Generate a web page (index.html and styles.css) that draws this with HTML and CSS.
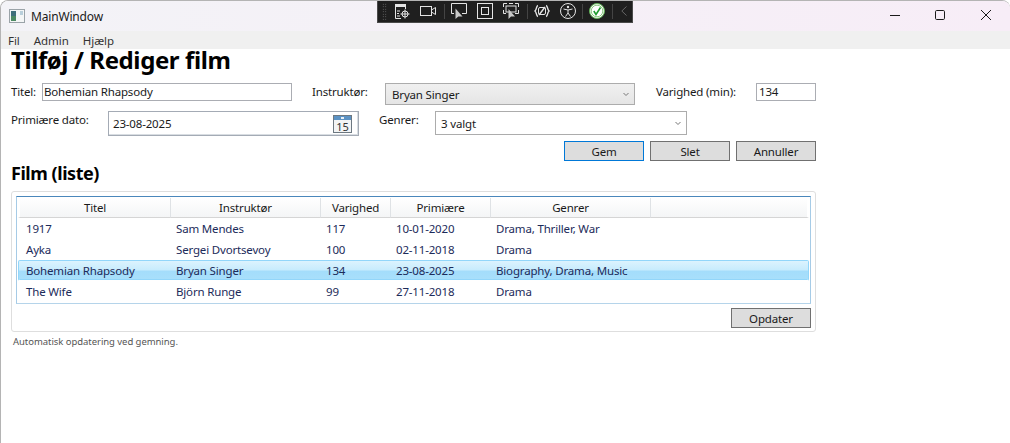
FILE: index.html
```html
<!DOCTYPE html>
<html lang="da">
<head>
  <meta charset="UTF-8">
  <title>MainWindow</title>
  <link rel="stylesheet" href="styles.css">
</head>
<body>

<div class="window">
  <div class="titlebar">
    <svg class="app-icon" width="16" height="14" viewBox="0 0 16 14">
      <rect x="0.5" y="0.5" width="15" height="13" fill="#f4f6f6" stroke="#9aa3a8"/>
      <rect x="2" y="2" width="5" height="10" fill="#3f6f7a"/>
      <rect x="2" y="7" width="5" height="5" fill="#4d8a63"/>
      <rect x="11" y="2" width="3" height="4" fill="#b9cfdb"/>
    </svg>
    <span class="app-name">MainWindow</span>
    <div class="caption">
      <svg width="10" height="10" viewBox="0 0 10 10"><path d="M0 5.5H10" stroke="#1a1a1a"/></svg>
      <svg width="10" height="10" viewBox="0 0 10 10"><rect x="0.5" y="0.5" width="9" height="9" rx="1.2" fill="none" stroke="#1a1a1a"/></svg>
      <svg width="10" height="10" viewBox="0 0 10 10"><path d="M0 0L10 10M10 0L0 10" stroke="#1a1a1a"/></svg>
    </div>
  </div>

  <div class="menubar">
    <span>Fil</span>
    <span>Admin</span>
    <span>Hjælp</span>
  </div>

  <div class="content">
    <h1>Tilføj / Rediger film</h1>

    <div class="form-row row-one">
      <label class="lbl-title">Titel:</label>
      <div class="field f-title">Bohemian Rhapsody</div>
      <label class="lbl-director">Instruktør:</label>
      <div class="combo f-director">
        <span>Bryan Singer</span>
        <svg class="chev" width="6" height="3" viewBox="0 0 6 3"><path d="M0.5 0L3 2.5L5.5 0" fill="none" stroke="#777"/></svg>
      </div>
      <label class="lbl-length">Varighed (min):</label>
      <div class="field f-length">134</div>
    </div>

    <div class="form-row row-two">
      <label class="lbl-date">Primiære dato:</label>
      <div class="date f-date">
        <span>23-08-2025</span>
        <svg class="cal" width="19" height="18" viewBox="0 0 19 18">
          <rect x="0.5" y="0.5" width="18" height="17" fill="#f2f4f5" stroke="#6d7881"/>
          <rect x="1" y="1" width="17" height="4" fill="#5b92c4"/>
          <rect x="8" y="2" width="3" height="2" fill="#e8f0f6"/>
          <text x="9.5" y="15.5" class="cal-num">15</text>
        </svg>
      </div>
      <label class="lbl-genre">Genrer:</label>
      <div class="combo-white f-genre">
        <span>3 valgt</span>
        <svg class="chev" width="6" height="3" viewBox="0 0 6 3"><path d="M0.5 0L3 2.5L5.5 0" fill="none" stroke="#777"/></svg>
      </div>
    </div>

    <div class="actions">
      <button class="btn btn-default">Gem</button>
      <button class="btn">Slet</button>
      <button class="btn">Annuller</button>
    </div>

    <h2>Film (liste)</h2>

    <div class="panel">
      <div class="grid">
        <table>
          <colgroup>
            <col class="c1"><col class="c2"><col class="c3"><col class="c4"><col class="c5"><col>
          </colgroup>
          <thead>
            <tr><th>Titel</th><th>Instruktør</th><th>Varighed</th><th>Primiære</th><th>Genrer</th><th></th></tr>
          </thead>
          <tbody>
            <tr><td>1917</td><td>Sam Mendes</td><td>117</td><td>10-01-2020</td><td>Drama, Thriller, War</td><td></td></tr>
            <tr><td>Ayka</td><td>Sergei Dvortsevoy</td><td>100</td><td>02-11-2018</td><td>Drama</td><td></td></tr>
            <tr class="selected"><td>Bohemian Rhapsody</td><td>Bryan Singer</td><td>134</td><td>23-08-2025</td><td>Biography, Drama, Music</td><td></td></tr>
            <tr><td>The Wife</td><td>Björn Runge</td><td>99</td><td>27-11-2018</td><td>Drama</td><td></td></tr>
          </tbody>
        </table>
      </div>
      <div class="panel-foot">
        <button class="btn">Opdater</button>
      </div>
    </div>

    <p class="note">Automatisk opdatering ved gemning.</p>
  </div>

  <!-- debug toolbar lies over the title bar -->
  <div class="toolbar">
    <i class="grip"></i>
    <svg width="16" height="16" viewBox="0 0 16 16" fill="none" stroke="#e4e4e4">
      <path d="M1.5 5V15.5H7M1.5 1.5H11.5V6M1.5 1.5V5" /><rect x="1" y="1" width="11" height="3" fill="#e4e4e4" stroke="none"/>
      <path d="M3 8H6M3 10.5H5M3 13H6"/><circle cx="11" cy="11" r="3"/><path d="M11 6.5V15.5M6.5 11H15.5"/>
    </svg>
    <svg width="16" height="16" viewBox="0 0 16 16" fill="none" stroke="#e4e4e4">
      <rect x="0.5" y="3.5" width="11" height="9"/><path d="M11.5 7L15.5 4.5V11.5L11.5 9"/>
    </svg>
    <i class="tb-sep"></i>
    <svg width="16" height="16" viewBox="0 0 16 16" fill="none" stroke="#e4e4e4">
      <path d="M3 10.5H0.5V0.5H15.5V10.5H11"/><path d="M4.5 5.5V16L7.3 13.5H11.5Z" fill="#c8c8c8" stroke="none"/>
    </svg>
    <svg width="16" height="16" viewBox="0 0 16 16" fill="none" stroke="#e4e4e4">
      <rect x="0.5" y="0.5" width="15" height="15"/><rect x="4.5" y="4.5" width="7" height="7"/>
    </svg>
    <svg width="16" height="16" viewBox="0 0 16 16" fill="none" stroke="#e4e4e4">
      <path d="M0.5 4V0.5H4M12 0.5H15.5V4M0.5 7V10.5H3M15.5 7V10.5H12M6 0.5H10"/><rect x="3" y="3" width="10" height="6"/><path d="M5.5 6V16L8 13.5H12Z" fill="#c8c8c8" stroke="none"/>
    </svg>
    <i class="tb-sep"></i>
    <svg width="16" height="16" viewBox="0 0 16 16" fill="none" stroke="#e4e4e4">
      <path d="M4 2.5C2 3 3 6 1 8C3 10 2 13 4 13.5M12 2.5C14 3 13 6 15 8C13 10 14 13 12 13.5" stroke-width="1.4"/><rect x="4.5" y="4.5" width="7" height="7" rx="1.5"/><path d="M5 12L11 4" stroke-width="1.4"/>
    </svg>
    <svg width="16" height="16" viewBox="0 0 16 16" fill="none" stroke="#e4e4e4">
      <circle cx="8" cy="8" r="7.5"/><circle cx="8" cy="4" r="1.2" fill="#e4e4e4" stroke="none"/><path d="M3.5 6L8 7L12.5 6M8 7V10L5.5 13.5M8 10L10.5 13.5"/>
    </svg>
    <i class="tb-sep tb-sep-a"></i>
    <svg width="16" height="16" viewBox="0 0 16 16">
      <circle cx="8" cy="8" r="7.5" fill="#f4f7f2" stroke="#5fb356"/><circle cx="8" cy="8" r="5.8" fill="#fff" stroke="#8ccb82"/><path d="M4.8 8L7 11.5L11.5 4.5" fill="none" stroke="#1f9c2e" stroke-width="1.6"/>
    </svg>
    <i class="tb-sep tb-sep-b"></i>
    <svg class="tb-chev" width="6" height="10" viewBox="0 0 6 10"><path d="M5.5 0.5L0.8 5L5.5 9.5" fill="none" stroke="#666"/></svg>
  </div>
</div>

</body>
</html>
```

FILE: styles.css
```css
* {
  margin: 0;
  padding: 0;
  box-sizing: border-box;
}
body {
  width: 1010px;
  height: 443px;
  overflow: hidden;
  background-color: #fff;
  font-family: "Noto Sans", "Liberation Sans", sans-serif;
  font-size: 11.5px;
  letter-spacing: -0.17px;
  color: #1a1a1a;
}
.window {
  position: relative;
  height: 443px;
  border-top: 1px solid #b4b4b4;
  border-left: 1px solid #b4b4b4;
  border-top-left-radius: 8px;
  border-top-right-radius: 8px;
  overflow: hidden;
}

.titlebar {
  height: 30px;
  display: flex;
  align-items: center;
  padding-left: 8px;
  background: linear-gradient(to right, #f3f3f7, #f7edf7);
}
.app-icon {
  margin-right: 6px;
}
.app-name {
  font-size: 12px;
}
.caption {
  margin-left: auto;
  margin-top: -2px;
  display: flex;
  gap: 35px;
  padding-right: 19px;
}
.caption svg:nth-child(2) {
  margin-right: 1px;
}

.menubar {
  height: 18px;
  display: flex;
  align-items: center;
  gap: 14px;
  padding-left: 7px;
  letter-spacing: -0.05px;
  background-color: #f0f0f0;
  color: #333;
}

.content {
  padding-left: 10px;
  width: 815px;
}
h1 {
  font-size: 24px;
  line-height: 22px;
  letter-spacing: -0.4px;
  color: #000;
}
h2 {
  font-size: 18px;
  line-height: 20px;
  letter-spacing: -0.45px;
  color: #000;
  margin-top: 2px;
}

.form-row {
  display: flex;
  align-items: flex-start;
}
.row-one {
  margin-top: 12px;
  height: 28px;
}
.row-two {
  height: 30px;
}
label {
  line-height: 16px;
  margin-top: 1px;
}
.lbl-title { width: 31px; }
.lbl-director { width: 73px; margin-left: 20px; }
.lbl-length { width: 100px; margin-left: 21px; }
.lbl-date { width: 97px; }
.lbl-genre { width: 56px; margin-left: 20px; }

.field {
  height: 18px;
  line-height: 16px;
  padding-left: 2px;
  border: 1px solid #abadb3;
}
.f-title { width: 250px; padding-left: 1px; }
.f-length { width: 60px; }

.combo,
.combo-white {
  display: flex;
  align-items: center;
  justify-content: space-between;
  border: 1px solid #acacac;
  padding: 0 5px 0 6px;
}
.combo {
  height: 22px;
  background: linear-gradient(#f0f0f0, #e5e5e5);
}
.combo-white {
  height: 24px;
  background-color: #fff;
  padding-left: 5px;
}
.f-director { width: 250px; }
.f-genre { width: 252px; }

.date {
  width: 251px;
  height: 25px;
  display: flex;
  align-items: center;
  justify-content: space-between;
  border: 1px solid #a4abb5;
  padding: 0 5px 0 4px;
  box-shadow: inset -1px -1px 0 #d8dde2;
}
.cal {
  margin-right: 1px;
}
.cal-num {
  font-size: 11px;
  letter-spacing: 0;
  text-anchor: middle;
  fill: #333;
}

.actions {
  display: flex;
  justify-content: flex-end;
  gap: 6px;
}
.btn {
  width: 80px;
  height: 20px;
  font-family: inherit;
  font-size: inherit;
  letter-spacing: inherit;
  color: #1a1a1a;
  background-color: #dddddd;
  border: 1px solid #707070;
}
.btn-default {
  border-color: #0078d7;
}

.panel {
  margin-top: 8px;
  height: 141px;
  padding: 4px;
  border: 1px solid #dedede;
  border-radius: 3px;
}
.grid {
  height: 108px;
  padding: 1px 1px 0;
  border: 1px solid #b5d4ea;
  border-top-color: #4a87bb;
  border-left-color: #a6cbe6;
  border-right-color: #a6cbe6;
}
table {
  width: 100%;
  border-collapse: separate;
  border-spacing: 0;
  table-layout: fixed;
  color: #1c2b5a;
}
.c1 { width: 152px; }
.c2 { width: 150px; }
.c3 { width: 70px; }
.c4 { width: 100px; }
.c5 { width: 160px; }
th {
  height: 20px;
  font-weight: normal;
  color: #1a1a1a;
  background: linear-gradient(#fff, #f4f5f6);
  border-bottom: 1px solid #d5d5d5;
}
th + th {
  border-left: 1px solid #dfe2e5;
}
th:first-child {
  border-left: 2px solid #fff;
}
th:last-child {
  border-right: 2px solid #fff;
}
td {
  height: 21px;
  padding-left: 6px;
  white-space: nowrap;
}
td:first-child {
  padding-left: 8px;
}
.selected td {
  background: linear-gradient(#dcf3fe 0%, #c8ecfd 45%, #a4ddfb 55%, #a8dffb 94%, #92d6fa 94%) padding-box;
  border-top: 1px solid #92d6fa;
  border-bottom: 1px solid transparent;
}
.selected td:first-child {
  padding-left: 7px;
  border-left: 1px solid #92d6fa;
  border-radius: 2px 0 0 2px;
}
.selected td:last-child {
  border-right: 1px solid #92d6fa;
  border-radius: 0 2px 2px 0;
}
.panel-foot {
  display: flex;
  justify-content: flex-end;
  margin-top: 4px;
}
.note {
  margin-top: 3px;
  margin-left: 2px;
  font-size: 9.5px;
  letter-spacing: -0.05px;
  color: #555;
}

.toolbar {
  position: absolute;
  left: 376px;
  top: -1px;
  width: 256px;
  height: 23px;
  display: flex;
  align-items: center;
  padding-left: 4px;
  background-color: #1f1f1f;
  border: 1px solid #4a4a4a;
  border-top: none;
}
.toolbar svg {
  margin-right: 10px;
  flex: none;
}
.grip {
  flex: none;
  width: 5px;
  height: 17px;
  margin-right: 7px;
  background-image: radial-gradient(#777 0.6px, transparent 0.7px);
  background-size: 2.5px 2.5px;
}
.tb-sep {
  flex: none;
  width: 1px;
  height: 15px;
  background-color: #444;
  margin-left: -2px;
  margin-right: 6px;
}
.tb-sep-a {
  margin-left: -4px;
}
.tb-sep-b {
  margin-left: -3px;
}
.toolbar .tb-chev {
  margin-left: 2px;
  margin-right: 0;
}
```
